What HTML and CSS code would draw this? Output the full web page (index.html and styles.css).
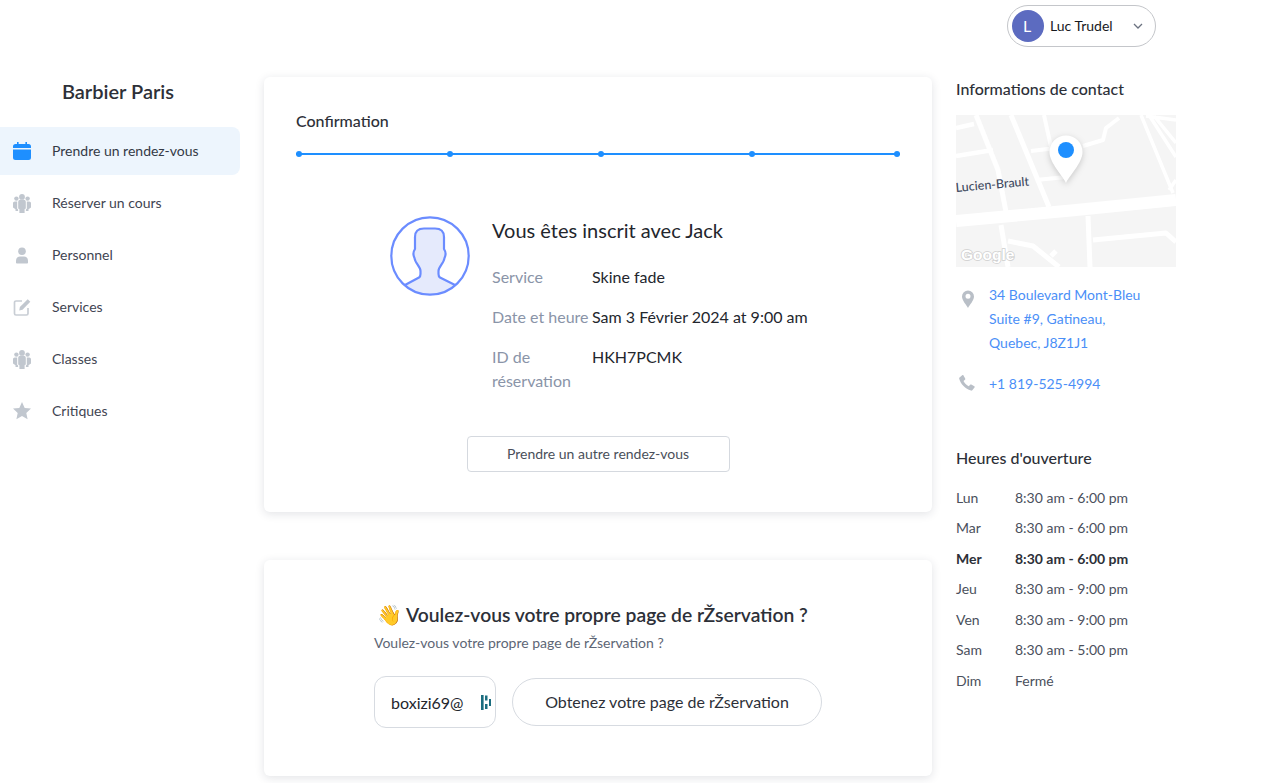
FILE: index.html
```html
<!DOCTYPE html>
<html lang="fr">
<head>
<meta charset="utf-8">
<title>Barbier Paris</title>
<link rel="stylesheet" href="styles.css">
</head>
<body>
<header class="topbar">
  <div class="user-pill">
    <span class="avatar">L</span>
    <span class="user-name">Luc Trudel</span>
    <svg class="chevron" width="10" height="6" viewBox="0 0 10 6"><path d="M1 1l4 4 4-4" fill="none" stroke="#6b7280" stroke-width="1.3"/></svg>
  </div>
</header>
<div class="layout">
  <aside class="sidebar">
    <h1 class="brand">Barbier Paris</h1>
    <nav class="nav">
      <a class="nav-item active">
        <svg class="nav-icon" viewBox="0 0 18 18"><path fill="#1e8fff" d="M4 0h1.600v2h6.800V0H14v2h1.500A2.500 2.500 0 0 1 18 4.500V6H0V4.500A2.500 2.500 0 0 1 2.500 2H4zM0 7.500h18v8A2.500 2.500 0 0 1 15.500 18h-13A2.500 2.500 0 0 1 0 15.500z"/></svg>
        <span>Prendre un rendez-vous</span>
      </a>
      <a class="nav-item">
        <svg class="nav-icon nav-icon-tall" viewBox="0 0 18 19"><g fill="#c1c7cf"><circle cx="9" cy="2.900" r="2.900"/><path d="M5.200 8c0-1.300 1-2.200 2.200-2.200h3.200c1.200 0 2.200.9 2.200 2.200v6.500l-1.200.8V19H6.400v-3.700l-1.200-.8z"/><circle cx="3.400" cy="4.600" r="2.200"/><circle cx="14.600" cy="4.600" r="2.200"/><path d="M1.800 7.500h2.400v7.200l.9.8v1.500H2.500v-1.800L0 13.500V9.300c0-1 .8-1.800 1.800-1.800zM16.200 7.500h-2.400v7.200l-.9.8v1.500h2.600v-1.800l2.500-1.700V9.300c0-1-.8-1.800-1.800-1.800z"/></g></svg>
        <span>Réserver un cours</span>
      </a>
      <a class="nav-item">
        <svg class="nav-icon" viewBox="0 0 18 18"><g fill="#c1c7cf"><circle cx="9" cy="5.200" r="3.800"/><path d="M3 16.800v-2.300c0-2.600 2-4.100 4-4.100h4c2 0 4 1.500 4 4.100v2.300c0 .5-.4.700-.8.700H3.800c-.4 0-.8-.2-.8-.7z"/></g></svg>
        <span>Personnel</span>
      </a>
      <a class="nav-item">
        <svg class="nav-icon" viewBox="0 0 18 18"><path d="M9 3H3a1.500 1.500 0 0 0-1.500 1.500v11A1.500 1.500 0 0 0 3 17h10.500a1.500 1.500 0 0 0 1.500-1.500V10" fill="none" stroke="#c9ced5" stroke-width="1.700"/><path d="M14.700 1.200l2.600 2.600-7.800 7.900-3.300.7.700-3.300z" fill="#c1c7cf"/></svg>
        <span>Services</span>
      </a>
      <a class="nav-item">
        <svg class="nav-icon nav-icon-tall" viewBox="0 0 18 19"><g fill="#c1c7cf"><circle cx="9" cy="2.900" r="2.900"/><path d="M5.200 8c0-1.300 1-2.200 2.200-2.200h3.200c1.200 0 2.200.9 2.200 2.200v6.500l-1.200.8V19H6.400v-3.700l-1.200-.8z"/><circle cx="3.400" cy="4.600" r="2.200"/><circle cx="14.600" cy="4.600" r="2.200"/><path d="M1.800 7.500h2.400v7.200l.9.8v1.500H2.500v-1.800L0 13.500V9.300c0-1 .8-1.800 1.800-1.800zM16.200 7.500h-2.400v7.200l-.9.8v1.500h2.600v-1.800l2.500-1.700V9.300c0-1-.8-1.800-1.800-1.800z"/></g></svg>
        <span>Classes</span>
      </a>
      <a class="nav-item">
        <svg class="nav-icon" viewBox="0 0 18 18"><path fill="#c1c7cf" d="M9 0l2.700 5.900 6.300.7-4.700 4.300 1.300 6.400L9 14.100l-5.600 3.200 1.300-6.400L0 6.600l6.300-.7z"/></svg>
        <span>Critiques</span>
      </a>
    </nav>
  </aside>

  <main class="main">
    <section class="card card-confirm">
      <h2 class="card-title">Confirmation</h2>
      <div class="stepper">
        <span class="dot"></span><span class="dot"></span><span class="dot"></span><span class="dot"></span><span class="dot dot-last"></span>
      </div>
      <div class="summary">
        <svg class="portrait" width="80" height="80" viewBox="0 0 80 80">
          <defs><clipPath id="ring"><circle cx="40" cy="40" r="38.700"/></clipPath></defs>
          <circle cx="40" cy="40" r="38.700" fill="#fff"/>
          <path clip-path="url(#ring)" d="M15 69L29 61.500Q30.500 60.500 30.500 58V55C30.500 51 25 47 24.500 42C23 39 23 36 25 33V21C25 15 29 12.500 34 12.500H45C50 12.500 54 15 54 21V33C56 36 56 39 54.500 42C54 47 48.500 51 48.500 55V58Q48.500 60.500 50 61.500L65 69V85H15z" fill="#e5eafc" stroke="#6b8cff" stroke-width="2.200" stroke-linejoin="round"/>
          <circle cx="40" cy="40" r="38.700" fill="none" stroke="#6b8cff" stroke-width="2.200"/>
        </svg>
        <div class="details">
          <h3 class="details-title">Vous êtes inscrit avec Jack</h3>
          <dl class="details-list">
            <dt>Service</dt><dd>Skine fade</dd>
            <dt>Date et heure</dt><dd>Sam 3 Février 2024 at 9:00 am</dd>
            <dt>ID de réservation</dt><dd>HKH7PCMK</dd>
          </dl>
        </div>
      </div>
      <div class="again-row"><button class="btn-again">Prendre un autre rendez-vous</button></div>
    </section>

    <section class="card card-promo">
      <div class="promo">
        <h2 class="promo-title"><span class="wave">👋</span> Voulez-vous votre propre page de rŽservation ?</h2>
        <p class="promo-sub">Voulez-vous votre propre page de rŽservation ?</p>
        <div class="promo-actions">
          <div class="email-field">
            <span class="email-value">boxizi69@</span>
            <svg class="dash-icon" width="10" height="15" viewBox="0 0 10 15"><g fill="#1b6d7f"><rect x="0" y="0" width="2.600" height="15"/><rect x="4" y="0.500" width="2.500" height="5"/><rect x="4" y="9" width="2.500" height="5"/><rect x="8" y="4" width="2" height="7"/></g></svg>
          </div>
          <button class="btn-page">Obtenez votre page de rŽservation</button>
        </div>
      </div>
    </section>
  </main>

  <aside class="info">
    <h2 class="info-title">Informations de contact</h2>
    <svg class="map" width="220" height="152" viewBox="0 0 220 152">
      <rect width="220" height="152" fill="#f5f5f5"/>
      <g fill="none" stroke="#fff" stroke-linejoin="round">
        <path d="M0 13L18 9 M0 41L37 35" stroke-width="4.500"/>
        <path d="M20 0L42 55L50 97" stroke-width="5"/>
        <path d="M55 0L93 92" stroke-width="5"/>
        <path d="M75 36L100 33M88 0L95 32M80 65L110 62" stroke-width="4"/>
        <path d="M127 31L147 25L150 13L163 3" stroke-width="4"/>
        <path d="M0 106L110 96L220 85" stroke-width="12"/>
        <path d="M45 110L52 152M132 101L134 152M137 125L210 118L220 127M52 126L77 131L103 152M95 141L100 136" stroke-width="5"/>
        <path d="M185 0L217 78M193 0L220 42M198 1L220 28M213 75L220 65M190 1L220 5" stroke-width="3.500"/>
      </g>
      <text class="map-label" x="0" y="77" transform="rotate(-5 0 77)">Lucien-Brault</text>
      <text class="map-google" x="5" y="145">Google</text>
      <path class="map-pin" d="M110 68C107 61 93.500 48 93.500 37a16.500 16.500 0 0 1 33 0C126.500 48 113 61 110 68z"/>
      <circle cx="110" cy="35" r="8" fill="#1e8fff"/>
    </svg>
    <div class="contact-row">
      <svg class="contact-icon" width="14" height="18" viewBox="0 0 14 18"><path fill-rule="evenodd" fill="#b9bfc7" d="M7 18C5.500 15 1 10.500 1 6.500a6 6 0 0 1 12 0C13 10.500 8.500 15 7 18zm0-9.300a2.500 2.500 0 1 0 0-5 2.500 2.500 0 0 0 0 5z"/></svg>
      <address class="contact-text">34 Boulevard Mont-Bleu<br>Suite #9, Gatineau,<br>Quebec, J8Z1J1</address>
    </div>
    <div class="contact-row phone-row">
      <svg class="contact-icon phone-icon" width="16" height="16" viewBox="0 0 16 16"><path fill="#b9bfc7" d="M.5 2.500L3.200.3c.5-.4 1-.3 1.300.2l1.700 3c.2.500.1.900-.2 1.200L4.500 6c.9 2.200 3 4.300 5.300 5.300l1.300-1.600c.3-.3.800-.4 1.200-.2l3 1.700c.5.300.6.900.2 1.300l-2.200 2.700c-.3.400-.8.500-1.300.4C6.300 14 1.800 9.300.2 3.800c-.1-.5 0-1 .3-1.300z"/></svg>
      <span class="contact-text">+1 819-525-4994</span>
    </div>
    <h2 class="info-title hours-title">Heures d'ouverture</h2>
    <ul class="hours">
      <li><span class="day">Lun</span><span>8:30 am - 6:00 pm</span></li>
      <li><span class="day">Mar</span><span>8:30 am - 6:00 pm</span></li>
      <li class="today"><span class="day">Mer</span><span>8:30 am - 6:00 pm</span></li>
      <li><span class="day">Jeu</span><span>8:30 am - 9:00 pm</span></li>
      <li><span class="day">Ven</span><span>8:30 am - 9:00 pm</span></li>
      <li><span class="day">Sam</span><span>8:30 am - 5:00 pm</span></li>
      <li><span class="day">Dim</span><span>Fermé</span></li>
    </ul>
  </aside>
</div>
</body>
</html>
```
FILE: styles.css
```css
* { box-sizing: border-box; }
html, body { margin: 0; padding: 0; }
body {
  width: 1277px;
  height: 783px;
  overflow: hidden;
  background: #fff;
  font-family: Lato, "Noto Sans", sans-serif;
  color: #2d3038;
}
h1, h2, h3, p, dl, dd, ul { margin: 0; padding: 0; }

.topbar {
  height: 77px;
  padding: 5px 121px 0 0;
  display: flex;
  justify-content: flex-end;
  align-items: flex-start;
}
.user-pill {
  width: 149px;
  height: 42px;
  border: 1px solid #c4c6ca;
  border-radius: 21px;
  display: flex;
  align-items: center;
  padding: 0 12px 0 4px;
}
.avatar {
  width: 32px;
  height: 32px;
  border-radius: 50%;
  background: #5c6bc0;
  color: #fff;
  display: flex;
  align-items: center;
  justify-content: center;
  font-size: 16px;
  padding: 0 2px 2px 0;
}
.user-name { margin: 0 0 2px 6px; font-size: 14px; color: #17191e; flex: 1; }
.chevron { flex: none; }

.layout { display: flex; align-items: flex-start; }

.sidebar { width: 240px; flex: none; }
.brand {
  font-size: 20px;
  font-weight: 600;
  text-align: center;
  line-height: 28px;
  margin: 0 0 22px;
  padding-right: 4px;
  color: #2d3038;
}
.nav { display: flex; flex-direction: column; gap: 4px; }
.nav-item {
  height: 48px;
  display: flex;
  align-items: center;
  padding-left: 13px;
  font-size: 14px;
  color: #3f4552;
  border-radius: 0 8px 8px 0;
}
.nav-item span { margin-bottom: 2px; }
.nav-item.active { background: #edf5fd; color: #343a46; }
.nav-icon { width: 18px; height: 18px; margin-right: 21px; flex: none; }
.nav-icon-tall { height: 19px; }

.main { width: 668px; margin-left: 24px; flex: none; }
.card {
  background: #fff;
  border-radius: 6px;
  box-shadow: 0 2px 10px rgba(30, 40, 60, 0.13);
}
.card-confirm { height: 435px; padding: 34px 32px 0; margin-bottom: 48px; }
.card-title { font-size: 16px; font-weight: 500; line-height: 20px; color: #2d3038; }
.stepper {
  margin-top: 22px;
  height: 2px;
  background: #1e8fff;
  display: flex;
  align-items: center;
}
.dot { width: 6px; height: 6px; border-radius: 50%; background: #1e8fff; flex: none; }
.dot:nth-child(-n+3) { margin-right: 145px; }
.dot-last { margin-left: auto; }

.summary { display: flex; margin: 61px 0 0 94px; }
.portrait { flex: none; }
.details { margin-left: 22px; width: 340px; }
.details-title { font-size: 20px; font-weight: 400; line-height: 26px; color: #23262d; margin: 1px 0 22px; }
.details-list {
  display: grid;
  grid-template-columns: 100px 1fr;
  row-gap: 16px;
  font-size: 16px;
  line-height: 24px;
}
.details-list dt { color: #8a94a8; }
.details-list dd { color: #23262d; }

.again-row { display: flex; justify-content: center; margin-top: 43px; }
.btn-again {
  width: 263px;
  height: 36px;
  padding: 0 0 2px;
  background: #fff;
  border: 1px solid #d5d9df;
  border-radius: 4px;
  font: 14px Lato, sans-serif;
  color: #4a4f5a;
}

.card-promo { height: 216px; padding: 42px 0 0 110px; }
.promo-title {
  font-size: 19.300px;
  font-weight: 600;
  line-height: 26px;
  color: #2d3038;
  margin-left: 3px;
}
.wave { font-family: "Noto Color Emoji", sans-serif; font-size: 20px; }
.promo-sub { font-size: 14px; line-height: 20px; color: #5d6675; margin-top: 5px; }
.promo-actions { display: flex; margin-top: 23px; align-items: flex-start; }
.email-field {
  width: 122px;
  height: 52px;
  border: 1px solid #d7dbe1;
  border-radius: 12px;
  display: flex;
  align-items: center;
  padding: 0 4px 0 16px;
  justify-content: space-between;
  font-size: 16px;
  color: #23262d;
}
.dash-icon { flex: none; }
.btn-page {
  margin: 2px 0 0 16px;
  width: 310px;
  height: 48px;
  padding: 0 0 2px;
  border: 1px solid #d7dbe1;
  border-radius: 24px;
  background: #fff;
  font: 16px Lato, sans-serif;
  color: #2d3038;
}

.info { width: 220px; margin-left: 24px; flex: none; }
.info-title { font-size: 16px; font-weight: 500; line-height: 24px; color: #2d3038; }
.map { display: block; margin-top: 14px; }
.map-label { font: 500 12.500px Lato, sans-serif; fill: #3f4a5f; }
.map-google {
  font: bold 15.500px "Liberation Sans", sans-serif;
  fill: #fff;
  stroke: #cfcfcf;
  stroke-width: 1.500px;
  paint-order: stroke;
}
.map-pin { fill: #fff; filter: drop-shadow(0 2px 3px rgba(0, 0, 0, 0.18)); }
.contact-row { display: flex; margin-top: 16px; }
.contact-icon { flex: none; margin: 7px 14px 0 5px; }
.contact-text {
  font-size: 14px;
  line-height: 24px;
  color: #4b8ff7;
  font-style: normal;
}
.phone-row { margin-top: 17px; }
.phone-icon { margin: 3px 14px 0 3px; }
.hours-title { margin-top: 50px; }
.hours { list-style: none; margin-top: 12px; font-size: 14px; color: #4a505c; }
.hours li { display: flex; height: 30.500px; align-items: center; }
.day { width: 59px; flex: none; }
.today { font-weight: 700; color: #2d3038; }
```
